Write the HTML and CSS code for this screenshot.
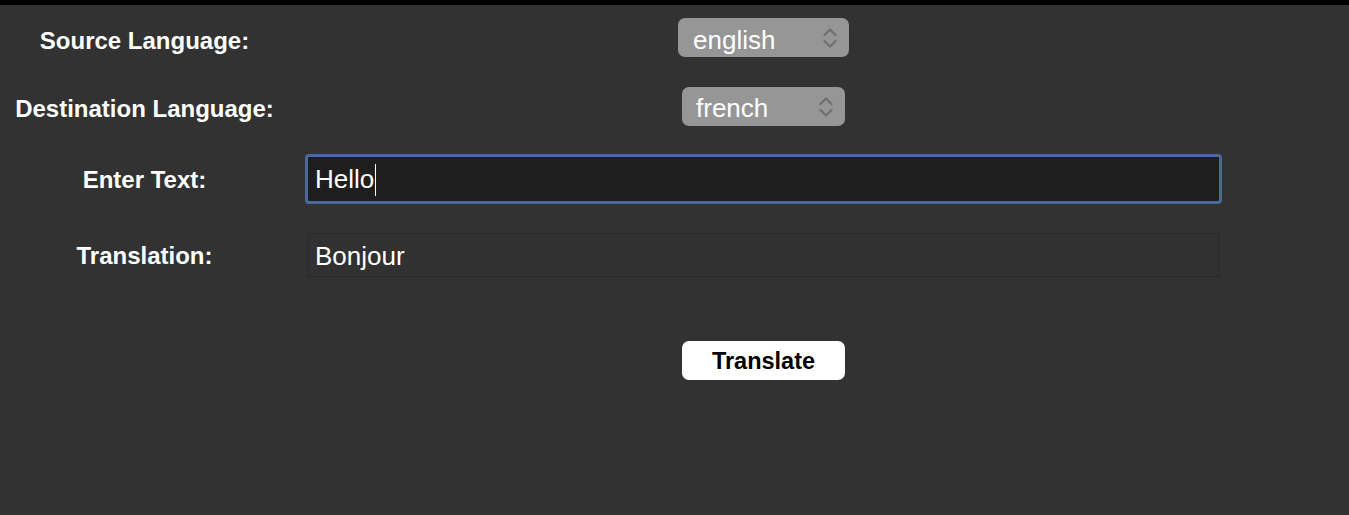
FILE: index.html
```html
<!DOCTYPE html>
<html lang="en">
<head>
<meta charset="utf-8">
<title>Translator</title>
<link rel="stylesheet" href="styles.css">
</head>
<body>
<div class="topbar"></div>
<main class="form">
  <div class="label label-first">Source Language:</div>
  <div class="select select-wide">
    <span class="select-text">english</span>
    <svg class="chev" width="14" height="22" viewBox="0 0 14 22"><path d="M1.5 8 L7 2.5 L12.5 8 M1.5 14 L7 19.5 L12.5 14" fill="none" stroke="#6f6f6f" stroke-width="2.2" stroke-linecap="round" stroke-linejoin="round"/></svg>
  </div>

  <div class="label label-second">Destination Language:</div>
  <div class="select select-narrow">
    <span class="select-text">french</span>
    <svg class="chev" width="14" height="22" viewBox="0 0 14 22"><path d="M1.5 8 L7 2.5 L12.5 8 M1.5 14 L7 19.5 L12.5 14" fill="none" stroke="#6f6f6f" stroke-width="2.2" stroke-linecap="round" stroke-linejoin="round"/></svg>
  </div>

  <div class="label label-low">Enter Text:</div>
  <div class="entry"><span>Hello</span><span class="caret"></span></div>

  <div class="label label-low">Translation:</div>
  <div class="output">Bonjour</div>

  <div class="spacer"></div>
  <button class="btn" type="button">Translate</button>
</main>
</body>
</html>
```

FILE: styles.css
```css
html, body {
  margin: 0;
  padding: 0;
  background: #323232;
  height: 100%;
}
body {
  font-family: "Liberation Sans", Arial, sans-serif;
  color: #ffffff;
}
.topbar {
  height: 5px;
  background: #000000;
}
.form {
  display: grid;
  grid-template-columns: 289px 949px;
  grid-template-rows: 65px 72px 74px 78px 133px;
  align-items: center;
}
.label {
  justify-self: center;
  font-weight: bold;
  font-size: 24px;
  line-height: 28px;
}
.label-first {
  margin-top: 7px;
}
.label-second {
  margin-top: 6px;
}
.label-low {
  margin-top: 2px;
}
.select {
  justify-self: center;
  display: flex;
  align-items: center;
  justify-content: space-between;
  height: 39px;
  box-sizing: border-box;
  background: #969696;
  border-radius: 7px;
  padding: 0 12px 0 15px;
  font-size: 26px;
  color: #ffffff;
}
.select-wide { width: 171px; }
.select-narrow { width: 163px; padding-left: 14px; }
.select-text { line-height: 30px; margin-top: 4px; }
.chev { display: block; margin-top: 1px; }
.entry {
  justify-self: center;
  width: 917px;
  height: 50px;
  box-sizing: border-box;
  border: 3px solid #4a6a9c;
  border-radius: 4px;
  background: #1e1e1e;
  display: flex;
  align-items: center;
  padding-left: 7px;
  padding-top: 1px;
  font-size: 26px;
}
.caret {
  display: inline-block;
  width: 1px;
  height: 32px;
  background: #ffffff;
  margin-left: 1px;
}
.output {
  justify-self: center;
  width: 913px;
  height: 44px;
  box-sizing: border-box;
  border: 1px solid #2a2a2a;
  background: #313131;
  display: flex;
  align-items: center;
  padding-left: 7px;
  padding-top: 2px;
  font-size: 26px;
}
.btn {
  justify-self: center;
  width: 163px;
  height: 39px;
  border: none;
  border-radius: 7px;
  background: #ffffff;
  color: #000000;
  font-family: "Liberation Sans", Arial, sans-serif;
  font-weight: bold;
  font-size: 23.5px;
  padding: 2px 0 0;
}
```
